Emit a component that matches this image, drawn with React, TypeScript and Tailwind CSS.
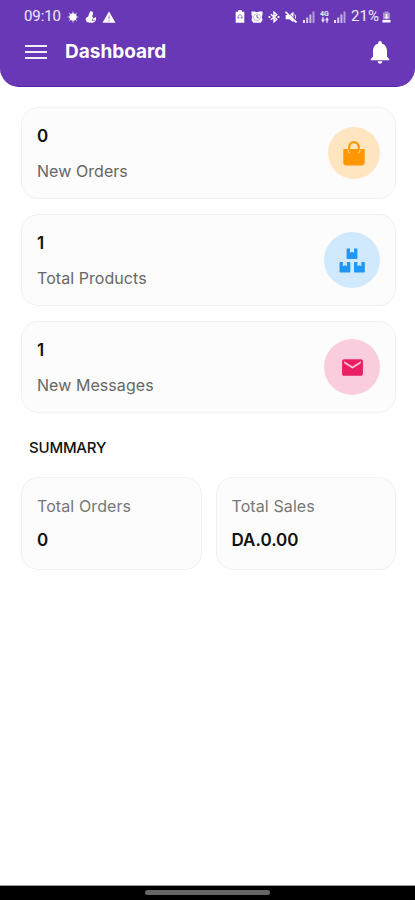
import type { ReactNode } from 'react'
import { MdMail, MdNotifications } from 'react-icons/md'

interface StatProps {
  value: string
  label: string
  circleClass: string
  icon: ReactNode
}

function BagIcon() {
  return (
    <svg viewBox="0 0 22 25" className="w-[22px] h-[25px]" fill="none">
      <path d="M6.200 9V6a4.800 4.800 0 0 1 9.600 0V9" stroke="#ff9800" strokeWidth="2.200" />
      <path
        fill="#ff9800"
        d="M1.500 8H20.500Q21.700 8 21.700 9.200V21.500Q21.700 24.500 18.700 24.500H3.300Q.3 24.500 .3 21.500V9.200Q.3 8 1.500 8Z"
      />
      <path d="M5.200 9v1.800l1.600 1.200M16.800 9v1.800l-1.600 1.200" stroke="#ffe0b2" strokeWidth="1" strokeLinecap="round" />
    </svg>
  )
}

function BoxesIcon() {
  return (
    <svg viewBox="0 0 27 25" className="w-[27px] h-[25px]" fill="#2196f3">
      <path d="M8.300.5H11v4.300l2-1 2 1V.5h2.700q.7 0 .7.700v9q0 .7-.7.700H8.300q-.7 0-.7-.7v-9q0-.7.700-.7z" />
      <path d="M1.200 14h2.700v4.300l2-1 2 1V14h2.700q.7 0 .7.700v9q0 .7-.7.700H1.200q-.7 0-.7-.7v-9q0-.7.700-.7z" />
      <path d="M15.700 14h2.700v4.300l2-1 2 1V14h2.700q.7 0 .7.700v9q0 .7-.7.700h-9.400q-.7 0-.7-.7v-9q0-.7.700-.7z" />
    </svg>
  )
}

function SignalIcon() {
  return (
    <svg viewBox="0 0 12 12" className="w-3 h-3 shrink-0" fill="#fff">
      <path d="M0 9h2v3H0z" opacity=".85" />
      <path d="M3.200 6.500h2V12h-2z" opacity=".75" />
      <path d="M6.400 3.500h2V12h-2z" opacity=".65" />
      <path d="M9.500.5h2V12h-2z" opacity=".5" />
    </svg>
  )
}

function StatusBar() {
  return (
    <div className="h-8 pt-px pl-6 flex items-center text-white/90 font-['Roboto'] text-[15px]">
      <span className="w-[37px] tracking-[-0.1px]">09:10</span>
      <svg viewBox="0 0 12 12" className="w-3 h-3 ml-1.5" fill="none" stroke="#fff">
        <circle cx="6" cy="6" r="3.300" fill="#fff" />
        <path d="M6 .5v11M.5 6h11M2.200 2.200l7.600 7.600M9.800 2.200 2.200 9.800" strokeWidth="1.200" opacity=".6" />
      </svg>
      <svg viewBox="0 0 12 12" className="w-3 h-3 ml-1.5" fill="#fff">
        <path d="M5 .4c2-.8 3.600.8 3 2.400L7.200 5.300c.7.500.9 1.100.9 2l2.900-1v2.200C10.600 11 8.700 11.800 5.800 11.800 2.500 11.800.7 10.500.7 8.500c0-1.500.8-2.300 2.300-2.800z" />
        <path d="M8 7.400 7.100 9.600 10 9" stroke="#673ab7" strokeWidth=".7" fill="none" />
      </svg>
      <svg viewBox="0 0 14 12" className="w-3.5 h-3 ml-[5px]">
        <path fill="#fff" d="M7 .5 13.500 11.800H.5z" />
        <path d="M7 4.500v3.600M7 9.300v1.200" stroke="#673ab7" strokeWidth="1" opacity=".75" />
      </svg>
      <svg viewBox="0 0 10 13" className="w-2.5 h-[13px] ml-[119px]">
        <path fill="#fff" d="M3 .3h4v1.400h2.300v11H.7v-11H3z" />
        <path d="M3 9V6.200L5 4.500l2 1.700V9M3 7.600h1.500M5.500 7.600H7" fill="none" stroke="#673ab7" strokeWidth=".9" opacity=".7" />
      </svg>
      <svg viewBox="0 0 12 12" className="w-3 h-3 ml-1.5">
        <path fill="#fff" d="M.5.5h3L6 1.300 8.500.5h3v3l-.7 2.500.7 3-1.700 2.700H2.200L.5 9l.7-3L.5 3.500z" />
        <circle cx="6" cy="6.300" r="3.500" fill="none" stroke="#673ab7" strokeWidth=".6" opacity=".6" />
        <path d="M6 4v2.500l1.700.6" fill="none" stroke="#673ab7" strokeWidth=".9" />
      </svg>
      <svg viewBox="0 0 12 12" className="w-3 h-3 ml-[5px]" fill="none" stroke="#fff" strokeWidth="1.400">
        <path d="M2.800 3.300 8.800 8.300 6 10.800V1.200l2.800 2.500-6 5" />
        <path d="M.6 6h1.800M9.600 6h1.800" strokeWidth="1.800" />
      </svg>
      <svg viewBox="0 0 12 12" className="w-3 h-3 ml-[5px] mr-1.5">
        <path fill="#fff" d="M.7 4h3.500L8.500.7v10.600L4.200 8.300H.7z" />
        <path d="M1-.6 12.600 11" stroke="#673ab7" strokeWidth="1" />
        <path d="M.5.8 11.500 11.500" stroke="#fff" strokeWidth="1.600" />
        <path d="M9.800 3.500q1.200 1.800.6 4" fill="none" stroke="#fff" strokeWidth="1" />
      </svg>
      <SignalIcon />
      <span className="w-[11px] ml-1 shrink-0 flex flex-col items-center text-[7px] leading-[6px] font-bold">
        4G
        <svg viewBox="0 0 8 6" className="w-2 h-1.5" fill="#fff">
          <path d="M1.300 0h1.400v2.500H4L2 5.800 0 2.500h1.300zM5.300 5.800V3.300H4L6 0l2 3.300H6.700v2.500z" opacity=".85" />
        </svg>
      </span>
      <span className="ml-1 flex">
        <SignalIcon />
      </span>
      <span className="ml-[5px] w-[31px] tracking-[0.1px]">21%</span>
      <svg viewBox="0 0 9 12" className="w-[9px] h-3 shrink-0" fill="#fff">
        <path d="M2.700.5h3.600v1.200H8v6H1v-6h1.700z" opacity=".45" />
        <path d="M3.700 3h1.600v3h1.500L4.500 8.300 2.200 6h1.500z" />
        <path d="M.5 8.800h8v2.700h-8z" />
      </svg>
    </div>
  )
}

function StatCard({ value, label, circleClass, icon }: StatProps) {
  return (
    <div className="h-[92px] flex items-center justify-between rounded-[17px] border border-[#f1f1f1] bg-[#fcfcfc] px-[15px]">
      <div className="h-full pt-4 flex flex-col gap-[11px]">
        <div className="h-6 text-[17px] leading-6 font-semibold text-[#111]">{value}</div>
        <div className="h-6 text-base leading-6 text-[#666] tracking-[0.06px]">{label}</div>
      </div>
      <div className={`rounded-full flex items-center justify-center ${circleClass}`}>{icon}</div>
    </div>
  )
}

function SummaryCard({ label, value }: { label: string; value: string }) {
  return (
    <div className="h-[93px] rounded-[17px] border border-[#f1f1f1] bg-[#fcfcfc] pl-[15px] pt-4">
      <div className="h-6 text-base leading-6 text-[#777] tracking-[0.1px]">{label}</div>
      <div className="mt-2.5 h-6 text-[17px] leading-6 font-semibold text-[#111]">{value}</div>
    </div>
  )
}

export default function App() {
  return (
    <div className="h-[900px] w-full flex flex-col overflow-hidden bg-white font-['Inter',sans-serif]">
      <header className="h-[87px] shrink-0 rounded-b-[19px] border-b border-[#5420a4] bg-[#6838b6]">
        <StatusBar />
        <div className="h-10 pl-[25px] pr-[21px] flex items-center text-white">
          <div className="w-[22px] -mt-px flex flex-col gap-1">
            <span className="h-[2px] bg-[#f3effa]" />
            <span className="h-[2px] bg-[#f3effa]" />
            <span className="h-[2px] bg-[#f3effa]" />
          </div>
          <h1 className="ml-[18px] text-[19px] leading-6 font-bold">Dashboard</h1>
          <MdNotifications className="ml-auto -mt-px w-7 h-7" />
        </div>
      </header>

      <main className="flex-1 pl-[21px] pr-[19px] pt-5">
        <div className="flex flex-col gap-[15px]">
          <StatCard
            value="0"
            label="New Orders"
            circleClass="w-[52px] h-[52px] bg-[#ffe5c0]"
            icon={<BagIcon />}
          />
          <StatCard
            value="1"
            label="Total Products"
            circleClass="w-14 h-14 bg-[#d0e9fc]"
            icon={<BoxesIcon />}
          />
          <StatCard
            value="1"
            label="New Messages"
            circleClass="w-14 h-14 bg-[#f9cddd]"
            icon={<MdMail className="w-[25px] h-[25px] text-[#e91e63]" />}
          />
        </div>

        <h2 className="mt-[23px] ml-2 h-6 text-[15px] leading-6 font-medium text-[#111] tracking-[-0.2px]">SUMMARY</h2>

        <div className="mt-[17px] grid grid-cols-2 gap-3.5">
          <SummaryCard label="Total Orders" value="0" />
          <SummaryCard label="Total Sales" value="DA.0.00" />
        </div>
      </main>

      <footer className="h-[15px] shrink-0 border-t border-[#999] bg-black flex justify-center">
        <div className="mt-1 w-[125px] h-[5px] rounded-full bg-[#666]" />
      </footer>
    </div>
  )
}
